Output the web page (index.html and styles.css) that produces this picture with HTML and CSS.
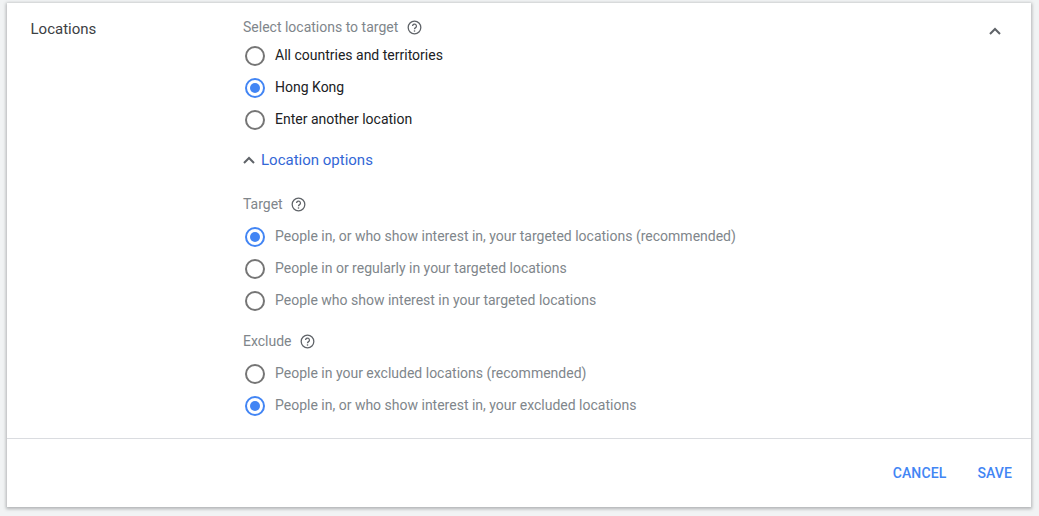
FILE: index.html
```html
<!DOCTYPE html>
<html lang="en">
<head>
<meta charset="utf-8">
<title>Locations</title>
<link rel="stylesheet" href="styles.css">
</head>
<body>
<main class="card">
  <section class="body">
    <h2 class="label">Locations</h2>
    <div class="content">
      <div class="heading heading-first">Select locations to target
        <svg class="help" viewBox="0 0 14 14"><circle cx="7" cy="7" r="5.9"/><path d="M5.2 5.6a1.8 1.8 0 1 1 2.8 1.5c-.7.45-1 .8-1 1.5"/><circle class="dot" cx="7" cy="10.2" r=".75"/></svg>
      </div>
      <div class="options options-first">
        <div class="option dark"><span class="radio"></span>All countries and territories</div>
        <div class="option dark"><span class="radio on"></span>Hong Kong</div>
        <div class="option dark"><span class="radio"></span>Enter another location</div>
      </div>
      <div class="toggle">
        <svg class="chev-small" viewBox="0 0 12 8"><path d="M1 7l5-5 5 5"/></svg>
        <span>Location options</span>
      </div>
      <div class="heading heading-target">Target
        <svg class="help" viewBox="0 0 14 14"><circle cx="7" cy="7" r="5.9"/><path d="M5.2 5.6a1.8 1.8 0 1 1 2.8 1.5c-.7.45-1 .8-1 1.5"/><circle class="dot" cx="7" cy="10.2" r=".75"/></svg>
      </div>
      <div class="options">
        <div class="option"><span class="radio on"></span>People in, or who show interest in, your targeted locations (recommended)</div>
        <div class="option"><span class="radio"></span>People in or regularly in your targeted locations</div>
        <div class="option"><span class="radio"></span>People who show interest in your targeted locations</div>
      </div>
      <div class="heading heading-exclude">Exclude
        <svg class="help" viewBox="0 0 14 14"><circle cx="7" cy="7" r="5.9"/><path d="M5.2 5.6a1.8 1.8 0 1 1 2.8 1.5c-.7.45-1 .8-1 1.5"/><circle class="dot" cx="7" cy="10.2" r=".75"/></svg>
      </div>
      <div class="options">
        <div class="option"><span class="radio"></span>People in your excluded locations (recommended)</div>
        <div class="option"><span class="radio on"></span>People in, or who show interest in, your excluded locations</div>
      </div>
    </div>
    <svg class="chev" viewBox="0 0 12 8"><path d="M1 7l5-5 5 5"/></svg>
  </section>
  <footer class="actions">
    <button class="btn" type="button">CANCEL</button>
    <button class="btn" type="button">SAVE</button>
  </footer>
</main>
</body>
</html>
```
FILE: styles.css
```css
* { box-sizing: border-box; }
html, body { height: 100%; }
body {
  margin: 0;
  background: #f1f3f4;
  font-family: Roboto, "Liberation Sans", sans-serif;
  font-size: 14px;
  color: #80868b;
  overflow: hidden;
}
.card {
  margin: 3px 8px 0 7px;
  height: 504px;
  background: #fff;
  box-shadow: 0 1px 3px 1px rgba(60, 64, 67, .35);
  display: flex;
  flex-direction: column;
}
.body {
  height: 436px;
  display: flex;
  align-items: flex-start;
  border-bottom: 1px solid #dadce0;
  flex: none;
}
.label {
  margin: 16px 0 0;
  padding-left: 23.5px;
  width: 236px;
  flex: none;
  font-size: 15px;
  font-weight: 400;
  line-height: 20px;
  color: #3c4043;
}
.content { flex: 1; padding-top: 14px; }
.heading {
  display: flex;
  align-items: center;
  height: 20px;
  line-height: 20px;
  color: #80868b;
}
.help {
  width: 15px;
  height: 15px;
  margin-left: 8.5px;
  margin-top: 1px;
  fill: none;
  stroke: #5f6368;
  stroke-width: 1.2;
}
.help .dot { fill: #5f6368; stroke: none; }
.heading-target { margin-top: 24px; }
.heading-exclude { margin-top: 15px; }
.options { margin-top: 6px; }
.options-first { margin-top: 2px; }
.option {
  display: flex;
  align-items: center;
  height: 32px;
  padding-left: 2px;
  line-height: 20px;
  color: #80868b;
}
.option.dark { color: #202124; }
.radio {
  width: 20px;
  height: 20px;
  margin: 2px 10px 0 0;
  border: 2px solid #757575;
  border-radius: 50%;
  flex: none;
  display: flex;
  align-items: center;
  justify-content: center;
}
.radio.on { border-color: #4285f4; }
.radio.on::after {
  content: "";
  width: 10px;
  height: 10px;
  border-radius: 50%;
  background: #4285f4;
}
.toggle {
  display: flex;
  align-items: center;
  height: 20px;
  margin-top: 15px;
  font-size: 15px;
  line-height: 20px;
  color: #3367d6;
}
.chev-small {
  width: 12px;
  height: 8px;
  margin-right: 6px;
  fill: none;
  stroke: #5f6368;
  stroke-width: 2;
}
.chev {
  width: 12px;
  height: 8px;
  margin: 24px 30px 0 0;
  flex: none;
  fill: none;
  stroke: #5f6368;
  stroke-width: 2;
}
.actions {
  flex: 1;
  display: flex;
  justify-content: flex-end;
  align-items: flex-start;
  gap: 31px;
  padding: 24px 19px 0 0;
}
.btn {
  padding: 0;
  border: 0;
  background: none;
  font-family: inherit;
  font-size: 14px;
  font-weight: 500;
  letter-spacing: .12px;
  line-height: 20px;
  color: #4285f4;
}
```
